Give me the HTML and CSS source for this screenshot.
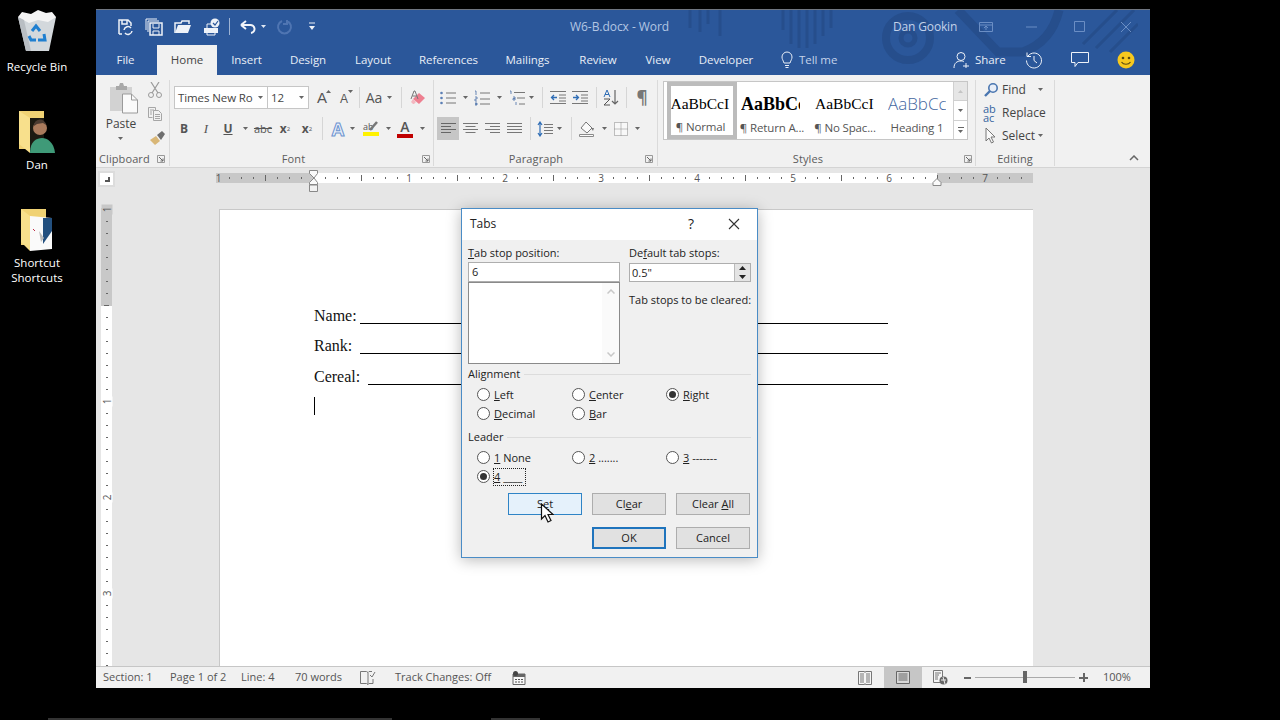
FILE: index.html
```html
<!DOCTYPE html>
<html lang="en">
<head>
<meta charset="utf-8">
<title>W6-B.docx - Word</title>
<link rel="stylesheet" href="styles.css">
</head>
<body>
<svg class="defs" width="0" height="0">
  <symbol id="caret" viewBox="0 0 5 3"><path d="M0 0h5L2.500 3z"/></symbol>
  <symbol id="launch" viewBox="0 0 8 8"><path d="M.5.5h7v7h-7z" fill="none" stroke="#999"/><path d="M2 2l4 4M6 3.5V6H3.500" fill="none" stroke="#666"/></symbol>
</svg>

<aside class="desktop">
  <div class="dicon bin">
    <svg width="40" height="44" viewBox="0 0 40 44"><path d="M1 8l8 34 23 0 7-34z" fill="#d3d8dc"/><path d="M1 8l4-5 9 2 7-4 8 3 6-1 4 5-8 5-10-2-9 3z" fill="#f4f4f4"/><path d="M9 42L1 8l6 3 7 31z" fill="#b9bec3"/><g fill="none" stroke="#1f7fd0" stroke-width="3"><path d="M15 22l4-5 4 5"/><path d="M27 25l1 6h-7"/><path d="M12 27l2 4h5"/></g></svg>
    <span>Recycle Bin</span>
  </div>
  <div class="dicon dan">
    <svg width="36" height="42" viewBox="0 0 36 42"><path d="M0 0h25v38H0z" fill="#f0d274"/><path d="M0 0l11 7v35L0 33z" fill="#f8e08c"/><path d="M11 7h14v31H11z" fill="#1c1a12"/><circle cx="21" cy="17" r="7" fill="#a97a5c"/><path d="M15 15a6 6 0 0 1 12-1l-3-2-6 1z" fill="#4a3a30"/><path d="M11 42c0-12 7-15 12-15s12 4 13 15z" fill="#3f9a78"/></svg>
    <span>Dan</span>
  </div>
  <div class="dicon shortcut">
    <svg width="32" height="42" viewBox="0 0 32 42"><path d="M0 0h25v36H0z" fill="#f0d274"/><path d="M0 0l9 7v35L0 33z" fill="#f8e08c"/><path d="M9 7l22 2v31L9 42z" fill="#fafafa"/><path d="M22 9h9v13l-9 13z" fill="#23507f"/><path d="M18 22l5 7-3 4z" fill="#bbb"/><path d="M12 20l2 2" stroke="#c0304a"/></svg>
    <span>Shortcut<br>Shortcuts</span>
  </div>
</aside>

<main class="window">
  <div class="chrome">
    <svg class="pattern" width="480" height="66" viewBox="0 0 480 66"><g fill="none" stroke="#264e8c"><g stroke-width="3"><path d="M32 0v18M42 0v22M50 0v14M62 0v26M125 0v20M133 0v34M141 0v38M149 0v38M157 0v34M165 0v26M173 0v18"/></g><circle cx="250" cy="28" r="22" stroke-width="8"/><circle cx="250" cy="28" r="7" stroke-width="5"/><path d="M300 0l40 42h25c22-8 32-25 36-42" stroke-width="9"/><path d="M425 34l34-34M438 38l38-38M452 42l28-28" stroke-width="3"/></g></svg>
    <header class="titlebar">
      <div class="qat">
        <svg class="q" width="18" height="18" viewBox="0 0 18 18"><path d="M3 16V2h9l3 3v3M3 16h3M6 2v4h5V2" fill="none" stroke="#eef2f8" stroke-width="1.500"/><path d="M8 12a4 4 0 0 1 7-2M16 13a4 4 0 0 1-7 2" fill="none" stroke="#eef2f8" stroke-width="1.500"/></svg>
        <svg class="q" width="18" height="18" viewBox="0 0 18 18"><path d="M1 12V1h11M3 14V3h11" fill="none" stroke="#eef2f8"/><path d="M5 17V5h12v12z" fill="none" stroke="#eef2f8" stroke-width="1.500"/><path d="M8 6v4h6V6M8 17v-4h6v4" fill="none" stroke="#eef2f8"/></svg>
        <svg class="q" width="18" height="18" viewBox="0 0 18 18"><path d="M1 15V5h6l1-2h7v3" fill="none" stroke="#eef2f8" stroke-width="1.500"/><path d="M1 15l3-8h13l-3 8z" fill="#eef2f8"/></svg>
        <svg class="q" width="18" height="18" viewBox="0 0 18 18"><path d="M1 10h14v5H1z" fill="#eef2f8"/><path d="M4 10V6h6M4 15v2h8v-2" fill="none" stroke="#eef2f8"/><circle cx="12" cy="5" r="4.500" fill="#eef2f8"/><path d="M10 5l2 2 3-4" fill="none" stroke="#2b579a" stroke-width="1.200"/></svg>
        <i class="qsep"></i>
        <svg class="q undo" width="18" height="18" viewBox="0 0 18 18"><path d="M2 7l5-4M2 7l5 4M2 7h9a4 4 0 0 1 1 8" fill="none" stroke="#f2f5fa" stroke-width="2"/></svg>
        <svg class="ct white"><use href="#caret"/></svg>
        <svg class="q redo" width="18" height="18" viewBox="0 0 18 18"><path d="M7 3a6.500 6.500 0 1 0 5 0M12 2v4h-4" fill="none" stroke="#4f75b2" stroke-width="2"/></svg>
        <svg class="q cust" width="8" height="9" viewBox="0 0 8 9"><path d="M1 1h6" stroke="#eef2f8"/><path d="M1 4h6L4 8z" fill="#eef2f8"/></svg>
      </div>
      <div class="doc-title">W6-B.docx - Word</div>
      <div class="user">Dan Gookin</div>
      <div class="winbtns">
        <svg width="14" height="10" viewBox="0 0 14 10"><path d="M.5.500h13v9H.5zM.5 3h13M7 8V4M5 6l2-2 2 2" fill="none" stroke="#6b8ec4"/></svg>
        <svg width="12" height="10" viewBox="0 0 12 10"><path d="M0 5h11" stroke="#6b8ec4"/></svg>
        <svg width="12" height="12" viewBox="0 0 12 12"><path d="M.5.500h10v10H.5z" fill="none" stroke="#6b8ec4"/></svg>
        <svg width="12" height="12" viewBox="0 0 12 12"><path d="M1 1l10 10M11 1L1 11" stroke="#6b8ec4"/></svg>
      </div>
    </header>

    <nav class="tabs">
      <span class="tab t-file">File</span>
      <span class="tab t-home">Home</span>
      <span class="tab t-ins">Insert</span>
      <span class="tab t-des">Design</span>
      <span class="tab t-lay">Layout</span>
      <span class="tab t-ref">References</span>
      <span class="tab t-mai">Mailings</span>
      <span class="tab t-rev">Review</span>
      <span class="tab t-vie">View</span>
      <span class="tab t-dev">Developer</span>
      <span class="tab t-tell"><svg width="12" height="18" viewBox="0 0 12 18"><path d="M3 12C2 9 1 8 1 6a5 5 0 0 1 10 0c0 2-1 3-2 6zM4 14.500h4M4.500 16.500h3" fill="none" stroke="#e8eef7"/></svg><span class="dim">Tell me</span></span>
      <span class="tab t-share"><svg width="16" height="18" viewBox="0 0 16 18"><circle cx="8" cy="5.500" r="4" fill="none" stroke="#eef2f8"/><path d="M1 17c0-5 3-7 7-7 1 0 2 0 3 1M10 15h6M13 12v5" fill="none" stroke="#eef2f8"/></svg><span>Share</span></span>
      <svg class="t-hist" width="18" height="18" viewBox="0 0 18 18"><path d="M3 5a7.500 7.500 0 1 1-1.500 4.500M2 1.500V5.500h4M9 5v4.500l3 2.500" fill="none" stroke="#eef2f8"/></svg>
      <svg class="t-com" width="18" height="16" viewBox="0 0 18 16"><path d="M.5.500h17v10H7l-3 4v-4H.5z" fill="none" stroke="#eef2f8"/></svg>
      <svg class="t-smile" width="18" height="18" viewBox="0 0 18 18"><circle cx="9" cy="9" r="8.500" fill="#f6c81e"/><circle cx="6" cy="7" r="1.300" fill="#5a4a10"/><circle cx="12" cy="7" r="1.300" fill="#5a4a10"/><path d="M4.500 11c2 3 7 3 9 0" fill="none" stroke="#5a4a10" stroke-width="1.200"/></svg>
    </nav>
  </div>

  <section class="ribbon">
    <div class="group g-clip">
      <div class="clip-body">
        <div class="paste">
          <svg width="28" height="31" viewBox="0 0 28 31"><path d="M0 4h22v24H0z" fill="#d2d2d2"/><path d="M6 3h3l1-3h3l1 3h3v4H6z" fill="#a8a8a8"/><path d="M12.500 11h9l6 6v13h-15z" fill="#fafafa" stroke="#9a9a9a"/><path d="M21.500 11v6h6" fill="none" stroke="#9a9a9a"/></svg>
          <span class="paste-l">Paste</span>
          <svg class="ct"><use href="#caret"/></svg>
        </div>
        <div class="clip-tools">
          <svg width="14" height="16" viewBox="0 0 14 16"><path d="M3 0l7 11M11 0L4 11" stroke="#9a9a9a" stroke-width="1.200"/><circle cx="3" cy="13" r="2.500" fill="none" stroke="#9a9a9a"/><circle cx="11" cy="13" r="2.500" fill="none" stroke="#9a9a9a"/></svg>
          <svg width="14" height="14" viewBox="0 0 14 14"><path d="M.5.500h7v3M.5.500v10h4M2 3h4M2 5h2M2 7h2M5.500 3.500h5l3 3v7h-8zM7 7.500h5M7 9.500h5M7 11.500h5" fill="none" stroke="#a6a6a6"/></svg>
          <svg class="brush" width="16" height="14" viewBox="0 0 16 14"><path d="M1 9l6-4 4 5-5 4z" fill="#d9b777"/><path d="M8 4l5-4 3 3-4 6z" fill="#6e6e6e"/></svg>
        </div>
      </div>
      <div class="glabel l-clip"><span>Clipboard</span><svg class="launch"><use href="#launch"/></svg></div>
    </div>

    <div class="group g-font">
      <div class="row r-f1">
        <div class="sel s-font"><span>Times New Ro</span><svg class="ct"><use href="#caret"/></svg></div>
        <div class="sel s-size"><span>12</span><svg class="ct"><use href="#caret"/></svg></div>
        <div class="c w22 grow"><span class="bigA">A</span><svg class="tri" width="5" height="3" viewBox="0 0 5 3"><path d="M0 3h5L2.500 0z" fill="#666"/></svg></div>
        <div class="c w22 grow"><span class="smallA">A</span><svg class="tri" width="5" height="3" viewBox="0 0 5 3"><path d="M0 0h5L2.500 3z" fill="#666"/></svg></div>
        <div class="c w8"><i class="vs"></i></div>
        <div class="c w22 aa">Aa</div>
        <div class="c w8"><svg class="ct"><use href="#caret"/></svg></div>
        <div class="c w16"><i class="vs"></i></div>
        <div class="c w18 eraser"><svg width="16" height="16" viewBox="0 0 16 16"><path d="M3 9l6-6 6 5-6 6z" fill="#ee7f90"/><path d="M3 9l3 3-2 2H3L1 12z" fill="#f4b7c0"/><path d="M1 9l3-8h1l3 8M2.500 6h4" fill="none" stroke="#777"/></svg></div>
      </div>
      <div class="row r-f2">
        <div class="c w22 tb">B</div>
        <div class="c w22 ti">I</div>
        <div class="c w22 tu">U</div>
        <div class="c w13"><svg class="ct"><use href="#caret"/></svg></div>
        <div class="c w22 ts">abc</div>
        <div class="c w22 tx">x<sub>2</sub></div>
        <div class="c w22 tx">x<sup>2</sup></div>
        <div class="c w9"><i class="vs tall"></i></div>
        <div class="c w22 fx">A</div>
        <div class="c w7"><svg class="ct"><use href="#caret"/></svg></div>
        <div class="c w30"><div class="hl"><span class="hl-t">ab</span><svg class="hl-pen" width="9" height="10" viewBox="0 0 9 10"><path d="M1 9l7-8" stroke="#777" stroke-width="2.500"/></svg><i class="hlbar"></i></div></div>
        <div class="c w4"><svg class="ct"><use href="#caret"/></svg></div>
        <div class="c w30"><div class="fc"><span>A</span><i class="fcbar"></i></div></div>
        <div class="c w4"><svg class="ct"><use href="#caret"/></svg></div>
      </div>
      <div class="glabel l-font"><span>Font</span><svg class="launch"><use href="#launch"/></svg></div>
    </div>

    <div class="group g-para">
      <div class="row r-p1">
        <div class="c w22"><svg width="16" height="14" viewBox="0 0 16 14"><g fill="#5b7fb5"><circle cx="1.500" cy="2" r="1.300"/><circle cx="1.500" cy="7" r="1.300"/><circle cx="1.500" cy="12" r="1.300"/></g><path d="M6 2h10M6 7h10M6 12h10" stroke="#777"/></svg></div>
        <div class="c w12"><svg class="ct"><use href="#caret"/></svg></div>
        <div class="c w22"><svg width="16" height="16" viewBox="0 0 16 16"><path d="M1 1h1v4M1 7h2v2H1v2h2M1 13h2v1H1h2v1H1" fill="none" stroke="#4a6fa8" stroke-width=".8"/><path d="M6 3h10M6 9h10M6 14h10" stroke="#777"/></svg></div>
        <div class="c w12"><svg class="ct"><use href="#caret"/></svg></div>
        <div class="c w24"><svg width="16" height="16" viewBox="0 0 16 16"><path d="M1 1h1v3M4 7h2v3H4V8.500h2M7 12v3" fill="none" stroke="#4a6fa8" stroke-width=".8"/><path d="M5 2.500h11M8 8h8M10 14h6" stroke="#777"/></svg></div>
        <div class="c w4"><svg class="ct"><use href="#caret"/></svg></div>
        <div class="c w18"><i class="vs"></i></div>
        <div class="c w14"><svg width="16" height="13" viewBox="0 0 16 13"><path d="M0 .500h16M9 4h7M9 7h7M9 10h7M0 12.500h16" stroke="#777"/><path d="M7 6.500H2M4 4L1.500 6.500 4 9" fill="none" stroke="#2f6db5" stroke-width="1.300"/></svg></div>
        <div class="c w30"><svg width="16" height="13" viewBox="0 0 16 13"><path d="M0 .500h16M9 4h7M9 7h7M9 10h7M0 12.500h16" stroke="#777"/><path d="M1 6.500h5M4 4l2.500 2.500L4 9" fill="none" stroke="#2f6db5" stroke-width="1.300"/></svg></div>
        <div class="c w2"><i class="vs"></i></div>
        <div class="c w28"><svg width="16" height="17" viewBox="0 0 16 17"><path d="M1 8l3-7 3 7M2 5.500h4" fill="none" stroke="#2f6db5"/><path d="M1 10h6L1 16h6" fill="none" stroke="#555"/><path d="M12 1v14M9 12l3 3 3-3" fill="none" stroke="#666" stroke-width="1.200"/></svg></div>
        <div class="c w2"><i class="vs"></i></div>
        <div class="c w30 pil">¶</div>
      </div>
      <div class="row r-p2">
        <div class="c w22 sel-on"><svg width="15" height="12" viewBox="0 0 15 12"><path d="M0 .500h15M0 3.500h10M0 6.500h15M0 9.500h10" stroke="#666"/></svg></div>
        <div class="c w22"><svg width="15" height="12" viewBox="0 0 15 12"><path d="M0 .500h15M2.500 3.500h10M0 6.500h15M2.500 9.500h10" stroke="#777"/></svg></div>
        <div class="c w22"><svg width="15" height="12" viewBox="0 0 15 12"><path d="M0 .500h15M5 3.500h10M0 6.500h15M5 9.500h10" stroke="#777"/></svg></div>
        <div class="c w22"><svg width="15" height="12" viewBox="0 0 15 12"><path d="M0 .500h15M0 3.500h15M0 6.500h15M0 9.500h15" stroke="#777"/></svg></div>
        <div class="c w10"><i class="vs tall"></i></div>
        <div class="c w20"><svg width="16" height="16" viewBox="0 0 16 16"><path d="M3 1v14M1 4l2-3 2 3M1 12l2 3 2-3" fill="none" stroke="#2f6db5" stroke-width="1.200"/><path d="M7 3.500h9M7 6.500h9M7 9.500h9M7 12.500h9" stroke="#777"/></svg></div>
        <div class="c w8"><svg class="ct"><use href="#caret"/></svg></div>
        <div class="c w16"><i class="vs tall"></i></div>
        <div class="c w16"><svg width="16" height="16" viewBox="0 0 16 16"><path d="M7 1l6 6-5 5-6-5z" fill="#fafafa" stroke="#777"/><path d="M12 7l2 3 1-3z" fill="#777"/><path d="M.5 13.500h14v2H.5z" fill="#fafafa" stroke="#8a8a8a"/></svg></div>
        <div class="c w18"><svg class="ct"><use href="#caret"/></svg></div>
        <div class="c w16"><svg width="14" height="14" viewBox="0 0 14 14"><path d="M.5.500h13v13H.5zM7 .500v13M.5 7h13" fill="#f8f8f8" stroke="#888" stroke-dasharray="1 1"/></svg></div>
        <div class="c w16"><svg class="ct"><use href="#caret"/></svg></div>
      </div>
      <div class="glabel l-para"><span>Paragraph</span><svg class="launch"><use href="#launch"/></svg></div>
    </div>

    <div class="group g-styles">
      <div class="gallery">
        <div class="sty sty-on"><span class="st st-n">AaBbCcI</span><span class="sl">¶ Normal</span></div>
        <div class="sty sty-ret"><span class="st st-b">AaBbCcI</span><span class="sl">¶ Return A...</span></div>
        <div class="sty"><span class="st st-n">AaBbCcI</span><span class="sl">¶ No Spac...</span></div>
        <div class="sty"><span class="st st-h">AaBbCcI</span><span class="sl">Heading 1</span></div>
        <div class="gscroll">
          <div class="gb off"><svg class="ct up"><use href="#caret"/></svg></div>
          <div class="gb"><svg class="ct"><use href="#caret"/></svg></div>
          <div class="gb more"><i></i><svg class="ct"><use href="#caret"/></svg></div>
        </div>
      </div>
      <div class="glabel l-sty"><span>Styles</span><svg class="launch"><use href="#launch"/></svg></div>
    </div>

    <div class="group g-edit">
      <div class="edit-list">
        <div class="ed"><svg class="edi" width="16" height="16" viewBox="0 0 16 16"><circle cx="10" cy="6" r="4.200" fill="#e8eef7" stroke="#4a76b0" stroke-width="1.600"/><path d="M7 9l-5 5" stroke="#4a76b0" stroke-width="2.400"/></svg><span>Find</span><svg class="ct c-find"><use href="#caret"/></svg></div>
        <div class="ed"><span class="abac">ab<br>ac</span><span>Replace</span></div>
        <div class="ed"><svg class="edi" width="16" height="18" viewBox="0 0 16 18"><path d="M3 1v13l3-3 2.500 5 2-1-2.500-5h4z" fill="#fafafa" stroke="#777"/></svg><span>Select</span><svg class="ct c-sel"><use href="#caret"/></svg></div>
      </div>
      <div class="glabel l-edit"><span>Editing</span></div>
    </div>
    <div class="collapse"><svg width="10" height="6" viewBox="0 0 10 6"><path d="M1 5l4-4 4 4" fill="none" stroke="#666" stroke-width="1.500"/></svg></div>
  </section>

  <div class="workspace">
    <div class="ruler-row">
      <div class="corner"><i></i></div>
      <div class="hruler">
        <span class="n first"><b>1</b></span><span class="n"></span><span class="n"><b>1</b></span><span class="n"><b>2</b></span><span class="n"><b>3</b></span><span class="n"><b>4</b></span><span class="n"><b>5</b></span><span class="n"><b>6</b></span><span class="n"><b class="g">7</b></span>
        <svg class="ind-l" width="10" height="22" viewBox="0 0 10 22"><path d="M.5.500h8v3L5 8 .5 3.500zM5 8l3.500 4.500v2h-8v-2z" fill="#fafafa" stroke="#888"/><path d="M.5 15h8v6.500h-8z" fill="#f2f2f2" stroke="#888"/></svg>
        <svg class="ind-r" width="10" height="8" viewBox="0 0 10 8"><path d="M5 .500l4 4v3H1v-3z" fill="#fafafa" stroke="#888"/></svg>
      </div>
    </div>
    <div class="doc-row">
      <div class="vruler">
        <span class="vn first"><b class="g">1</b></span><span class="vn"></span><span class="vn"><b>1</b></span><span class="vn"><b>2</b></span><span class="vn"><b>3</b></span>
      </div>
      <article class="page">
        <div class="dl"><span class="lbl">Name:</span><span class="ul"></span></div>
        <div class="dl"><span class="lbl">Rank:</span><span class="ul"></span></div>
        <div class="dl d3"><span class="lbl wide">Cereal:</span><span class="ul"></span></div>
        <i class="caret-line"></i>
      </article>
    </div>
  </div>

  <footer class="status">
    <span class="s s1">Section: 1</span>
    <span class="s s2">Page 1 of 2</span>
    <span class="s s3">Line: 4</span>
    <span class="s s4">70 words</span>
    <svg class="s-book" width="16" height="16" viewBox="0 0 16 16"><path d="M.5 1.500h6l1.500 1v12l-1.500-1h-6zM8 2.500l1-1h3M8 14.500l1-1h4V9" fill="none" stroke="#777"/><path d="M10 5l2 2 3-5" fill="none" stroke="#777"/></svg>
    <span class="s s5">Track Changes: Off</span>
    <svg class="s-macro" width="14" height="14" viewBox="0 0 14 14"><path d="M1 3h12v10.500H1z" fill="#f8f8f8" stroke="#666"/><path d="M1 3h12v3H1z" fill="#666"/><circle cx="3.500" cy="2.500" r="2.500" fill="#444"/><path d="M3 8.500h2M6 8.500h2M9 8.500h2M3 11h2M6 11h2M9 11h2" stroke="#555"/></svg>
    <div class="views">
      <svg class="v-read" width="14" height="14" viewBox="0 0 14 14"><path d="M.5.500h6l.5 1 .5-1h6v13h-6l-.5-1-.5 1h-6zM2 3h4M2 5h4M2 7h4M2 9h4M2 11h4M8 3h4M8 5h4M8 7h4M8 9h4M8 11h4" fill="#f4f4f4" stroke="#777"/></svg>
      <div class="v-print"><svg width="14" height="13" viewBox="0 0 14 13"><path d="M.5.500h13v12H.5zM2.500 3h9M2.500 5h9M2.500 7h9M2.500 9h9" fill="#d8d8d8" stroke="#666"/></svg></div>
      <svg class="v-web" width="15" height="15" viewBox="0 0 15 15"><path d="M.5.500h9v12H.5zM2 3h6M2 5h4M2 7h3M2 9h3" fill="#f4f4f4" stroke="#777"/><circle cx="10.500" cy="10.500" r="4" fill="#666"/><path d="M8 10h5M10 7l2 7" stroke="#eee"/></svg>
      <div class="zoom"><i class="zm"></i><div class="zline"><i class="zthumb"></i></div><i class="zp"></i></div>
      <span class="s pct">100%</span>
    </div>
  </footer>

  <div class="dialog">
    <div class="dlg-title"><span>Tabs</span><span class="q-mark">?</span><svg width="12" height="12" viewBox="0 0 12 12"><path d="M1 1l10 10M11 1L1 11" stroke="#333" stroke-width="1.100"/></svg></div>
    <div class="dlg-body">
      <div class="dlg-top">
        <div class="col-l">
          <div class="flabel"><u>T</u>ab stop position:</div>
          <div class="inp">6</div>
          <div class="list">
            <div class="list-sb">
              <svg width="8" height="5" viewBox="0 0 8 5"><path d="M.5 4.500L4 1l3.500 3.500" fill="none" stroke="#c8c8c8" stroke-width="1.500"/></svg>
              <svg width="8" height="5" viewBox="0 0 8 5"><path d="M.5.500L4 4 7.500.500" fill="none" stroke="#c8c8c8" stroke-width="1.500"/></svg>
            </div>
          </div>
        </div>
        <div class="col-r">
          <div class="flabel">De<u>f</u>ault tab stops:</div>
          <div class="spin"><span>0.5"</span><div class="spb"><i><svg width="7" height="4" viewBox="0 0 7 4"><path d="M0 4h7L3.500 0z" fill="#222"/></svg></i><i><svg width="7" height="4" viewBox="0 0 7 4"><path d="M0 0h7L3.500 4z" fill="#222"/></svg></i></div></div>
          <div class="clearing">Tab stops to be cleared:</div>
        </div>
      </div>
      <div class="legend l1"><span>Alignment</span><i></i></div>
      <div class="radios">
        <label class="ra"><i class="rd"></i><span><u>L</u>eft</span></label>
        <label class="ra"><i class="rd"></i><span><u>C</u>enter</span></label>
        <label class="ra"><i class="rd on"></i><span><u>R</u>ight</span></label>
        <label class="ra"><i class="rd"></i><span><u>D</u>ecimal</span></label>
        <label class="ra"><i class="rd"></i><span><u>B</u>ar</span></label>
      </div>
      <div class="legend l2"><span>Leader</span><i></i></div>
      <div class="radios">
        <label class="ra"><i class="rd"></i><span><u>1</u> None</span></label>
        <label class="ra"><i class="rd"></i><span><u>2</u> .......</span></label>
        <label class="ra"><i class="rd"></i><span><u>3</u> -------</span></label>
        <label class="ra"><i class="rd on"></i><span class="focus"><u>4</u> ____</span></label>
      </div>
      <div class="btns b1">
        <span class="btn hot">S<u>e</u>t</span>
        <span class="btn">Cl<u>e</u>ar</span>
        <span class="btn">Clear <u>A</u>ll</span>
      </div>
      <div class="btns b2">
        <span class="btn def">OK</span>
        <span class="btn">Cancel</span>
      </div>
    </div>
    <svg class="cursor" width="14" height="20" viewBox="0 0 14 20"><path d="M1.500 1v15l3.500-3.500 3 6.500 3-1.500-3-6h5z" fill="#fff" stroke="#111" stroke-width="1.200"/></svg>
  </div>
</main>

<div class="taskstrip"><i class="ts1"></i><i class="ts2"></i></div>
</body>
</html>
```

FILE: styles.css
```css
* { box-sizing: border-box; }
html, body { margin: 0; height: 720px; overflow: hidden; }
body {
  background: #000;
  display: flex;
  align-items: flex-start;
  font-family: "Open Sans", "Noto Sans", sans-serif;
  color: #444;
}
.defs { position: absolute; }
i { display: block; font-style: normal; }
svg { flex-shrink: 0; display: block; }

/* desktop */
.desktop { width: 96px; flex-shrink: 0; display: flex; flex-direction: column; align-items: flex-start; }
.dicon { width: 74px; display: flex; flex-direction: column; align-items: center; color: #fff; font-size: 11.5px; line-height: 15px; text-align: center; letter-spacing: .05px; }
.dicon.bin { margin-top: 9px; }
.dicon.bin span { margin-top: 6px; }
.dicon.dan { margin-top: 37px; }
.dicon.dan span { margin-top: 4px; }
.dicon.shortcut { margin-top: 37px; }
.dicon.shortcut span { margin-top: 4px; }

/* window */
.window { position: relative; width: 1054px; height: 679px; margin-top: 9px; flex-shrink: 0; display: flex; flex-direction: column; background: #e6e6e6; border-top: 1px solid #6f7580; }
.chrome { position: relative; flex-shrink: 0; overflow: hidden; background: #2b579a; }
.pattern { position: absolute; left: 562px; top: 0; }
.titlebar { position: relative; height: 33px; display: flex; align-items: center; }
.qat { display: flex; align-items: center; margin-left: 20px; width: 354px; flex-shrink: 0; }
.q { margin-right: 11px; }
.q.undo { margin-right: 4px; }
.q.redo { margin: 0 0 0 9px; }
.q.cust { margin: 0 0 0 15px; }
.qsep { width: 1px; height: 17px; background: #9db3d4; margin: 0 9px 0 -3px; }
.ct { width: 5px; height: 3px; fill: #666; }
.ct.white { fill: #dfe7f3; }
.ct.up { transform: rotate(180deg); }
.doc-title { width: 323px; margin-left: 100px; flex-shrink: 0; font-size: 12px; color: #b3c6e3; letter-spacing: -.05px; }
.user { width: 86px; flex-shrink: 0; font-size: 12px; color: #c3d2e9; letter-spacing: -.15px; }
.winbtns { display: flex; align-items: center; }
.winbtns svg:nth-child(1) { margin-right: 33px; }
.winbtns svg:nth-child(2) { margin-right: 36px; }
.winbtns svg:nth-child(3) { margin-right: 34px; }

.tabs { position: relative; height: 32px; display: flex; align-items: flex-end; color: #e8eef7; font-size: 11.5px; letter-spacing: -.05px; }
.tab { height: 30px; display: flex; align-items: center; justify-content: center; line-height: 16px; flex-shrink: 0; }
.t-file { width: 61px; padding-right: 2px; }
.t-home { width: 60px; background: #f1f1f1; color: #444; }
.t-ins { width: 59px; }
.t-des { width: 64px; }
.t-lay { width: 66px; }
.t-ref { width: 85px; }
.t-mai { width: 73px; }
.t-rev { width: 68px; }
.t-vie { width: 52px; }
.t-dev { width: 84px; }
.t-tell { width: 68px; margin-left: 13px; justify-content: flex-start; }
.t-tell .dim { color: #c4d3ea; margin-left: 6px; }
.t-share { width: 72px; margin-left: 104px; justify-content: flex-start; }
.t-share span { margin-left: 6px; }
.t-hist { margin: 0 0 6px 0; flex-shrink: 0; }
.t-com { margin: 0 0 7px 28px; }
.t-smile { margin: 0 0 6px 28px; }

/* ribbon */
.ribbon { height: 93px; flex-shrink: 0; background: #f1f1f1; border-bottom: 1px solid #d4d4d4; display: flex; font-size: 11.5px; color: #444; }
.group { display: flex; flex-direction: column; border-right: 1px solid #dadada; margin: 5px 0 1px; position: relative; }
.g-clip { width: 74px; }
.g-font { width: 264px; padding: 6px 0 0 3px; }
.g-para { width: 224px; padding: 6px 0 0 3px; }
.g-styles { width: 318px; padding: 1px 0 0 5px; }
.g-edit { width: 79px; }
.glabel { margin-top: auto; height: 15px; display: flex; align-items: center; justify-content: center; font-size: 11px; line-height: 15px; color: #5c5c5c; position: relative; letter-spacing: .1px; }
.launch { position: absolute; right: 3px; top: 4px; width: 8px; height: 8px; }
.l-clip { justify-content: flex-start; padding-left: 3px; }
.l-clip .launch { right: 4px; }
.l-font { padding-right: 19px; }
.l-para { padding-right: 22px; }
.l-para .launch { right: 4px; }
.l-sty { padding-right: 22px; }

.clip-body { display: flex; padding-top: 3px; }
.paste { width: 49px; padding-left: 14px; display: flex; flex-direction: column; }
.paste-l { width: 40px; margin: 2px 0 0 -9px; text-align: center; line-height: 16px; font-size: 12px; }
.paste .ct { margin: 5px 0 0 8px; }
.clip-tools { display: flex; flex-direction: column; align-items: center; width: 20px; gap: 9px; margin-top: -1px; }
.brush { margin-left: 3px; margin-top: 1px; }

.row { display: flex; align-items: center; height: 23px; }
.r-f1 { margin-left: 1px; }
.r-f2, .r-p2 { margin-top: 8px; }
.c { display: flex; align-items: center; justify-content: center; height: 23px; flex-shrink: 0; position: relative; color: #555; }
.w2 { width: 2px; } .w4 { width: 4px; } .w7 { width: 7px; } .w8 { width: 8px; } .w9 { width: 9px; }
.w10 { width: 10px; } .w12 { width: 12px; } .w13 { width: 13px; } .w14 { width: 14px; } .w16 { width: 16px; }
.w18 { width: 18px; } .w20 { width: 20px; } .w22 { width: 22px; } .w24 { width: 24px; } .w28 { width: 28px; } .w30 { width: 30px; }
.vs { width: 1px; height: 21px; background: #d6d6d6; flex-shrink: 0; }
.vs.tall { height: 23px; }
.sel { height: 23px; background: #fff; border: 1px solid #c6c6c6; display: flex; align-items: center; justify-content: space-between; padding: 0 4px 0 3px; font-size: 11.500px; letter-spacing: -.1px; color: #444; flex-shrink: 0; }
.s-font { width: 94px; }
.s-size { width: 42px; margin-left: -1px; }
.s-size + .c { margin-left: 2px; }
.bigA { font-size: 15px; color: #555; font-family: "Liberation Sans", sans-serif; }
.smallA { font-size: 12px; color: #555; font-family: "Liberation Sans", sans-serif; margin-top: 2px; }
.tri { position: absolute; top: 4px; right: 2px; }
.aa { font-size: 14px; color: #555; }
.tb { font-weight: 700; font-size: 12px; }
.ti { font-style: italic; font-family: "Liberation Serif", serif; font-size: 13px; }
.tu { text-decoration: underline; font-weight: 700; font-size: 12px; }
.ts { text-decoration: line-through; font-size: 11px; }
.tx { font-weight: 700; font-size: 12px; }
.tx sub, .tx sup { font-size: 6px; font-weight: 400; line-height: 0; }
.fx { font-size: 18px; font-weight: 700; color: #eaf0fa; -webkit-text-stroke: 1px #6c93cf; line-height: 20px; }
.hl { position: relative; display: flex; flex-direction: column; align-items: flex-start; width: 16px; }
.hl-t { font-size: 9px; line-height: 11px; height: 11px; color: #555; }
.hl-pen { position: absolute; right: 1px; top: 0; }
.hlbar { width: 16px; height: 4px; background: #fff200; }
.fc { display: flex; flex-direction: column; align-items: center; width: 16px; font-size: 14px; font-weight: 600; line-height: 14px; color: #555; }
.fcbar { width: 16px; height: 4px; background: #c00000; }
.pil { font-size: 17px; font-weight: 700; color: #777; }
.sel-on { background: #c6c6c6; }

.gallery { width: 305px; height: 59px; background: #fff; border: 1px solid #c6c6c6; display: flex; position: relative; }
.sty { width: 72px; flex-shrink: 0; display: flex; flex-direction: column; align-items: center; padding-top: 12px; }
.sty-on { width: 70px; height: 57px; margin: 0 0 0 3px; border: 4px solid #bcbcbc; padding: 8px 3px 0 0; }
.sty-ret { padding-right: 5px; }
.sty-ret .sl { margin-right: -3px; }
.st { height: 20px; line-height: 20px; white-space: nowrap; width: 60px; overflow: hidden; color: #000; }
.st-n { font-family: "Liberation Serif", serif; font-size: 15.500px; }
.st-b { font-family: "Liberation Serif", serif; font-size: 18px; font-weight: 700; width: 59px; }
.st-h { font-family: "Open Sans", sans-serif; font-size: 17px; font-weight: 300; color: #44689f; width: 58px; }
.sl { font-size: 11.500px; letter-spacing: -.15px; line-height: 16px; margin-top: 6px; white-space: nowrap; color: #555; }
.gscroll { width: 14px; margin-left: auto; display: flex; flex-direction: column; border-left: 1px solid #d0d0d0; }
.gb { height: 19px; flex: 1; display: flex; flex-direction: column; gap: 2px; align-items: center; justify-content: center; border-bottom: 1px solid #d0d0d0; background: #fff; }
.gb:last-child { border-bottom: 0; }
.gb.off { background: #e6e6e6; }
.gb.off .ct { fill: #c4c4c4; }
.gb.more i { width: 6px; height: 1px; background: #666; }

.edit-list { display: flex; flex-direction: column; margin-top: -2px; }
.ed { height: 23px; display: flex; align-items: center; font-size: 12px; color: #444; padding-left: 7px; }
.ed > span:not(.abac) { margin-left: 3px; }
.abac { width: 16px; font-size: 11px; line-height: 9px; color: #35649f; }
.c-find { margin-left: 12px; }
.c-sel { margin-left: 3px; }
.collapse { flex: 1; display: flex; justify-content: flex-end; align-items: flex-end; padding: 0 11px 6px 0; }

/* workspace */
.workspace { flex: 1; min-height: 0; display: flex; flex-direction: column; overflow: hidden; position: relative; }
.ruler-row { height: 40px; flex-shrink: 0; display: flex; padding: 5px 0 0 4px; }
.corner { width: 13px; height: 12px; background: #fff; box-shadow: 0 0 0 2px #dcdcdc; display: flex; align-items: flex-end; justify-content: flex-end; padding: 0 3px 3px 0; flex-shrink: 0; }
.corner i { width: 5px; height: 5px; border: solid #555; border-width: 0 2px 2px 0; }
.hruler {
  position: relative; width: 817px; height: 10px; margin-left: 103px; display: flex; flex-shrink: 0;
  font-size: 10px; line-height: 10px; color: #555;
  background:
    linear-gradient(90deg, #666 1px, transparent 1px) 145px 2px / 96px 6px repeat-x,
    linear-gradient(90deg, #666 1px, transparent 1px) 1px 4px / 12px 2px repeat-x,
    linear-gradient(90deg, #c8c8c8 97px, #fff 97px 721px, #c8c8c8 721px);
}
.n { width: 96px; flex-shrink: 0; display: flex; justify-content: center; }
.n.first { margin-left: -47px; }
.n b { font-weight: 400; width: 10px; text-align: center; background: #fff; height: 10px; }
.n.first b { width: 6px; margin-left: 3px; background: #c8c8c8; }
.n b.g { background: #c8c8c8; }
.ind-l { position: absolute; left: 93px; top: -3px; }
.ind-r { position: absolute; left: 716px; top: 5px; }
.doc-row { flex: 1; min-height: 0; display: flex; }
.vruler {
  width: 11px; height: 100%; margin-left: 5px; flex-shrink: 0; font-size: 10px; color: #555; display: flex; flex-direction: column; align-items: center;
  background:
    linear-gradient(180deg, #666 1px, transparent 1px) 3px 1px / 5px 96px repeat-y,
    linear-gradient(180deg, #666 1px, transparent 1px) 5px 1px / 2px 12px repeat-y,
    linear-gradient(180deg, #c8c8c8 98px, #fff 98px);
}
.vn { height: 96px; flex-shrink: 0; display: flex; align-items: center; justify-content: center; }
.vn.first { margin-top: -47px; }
.vn b { font-weight: 400; transform: rotate(-90deg); background: #fff; width: 10px; height: 11px; line-height: 11px; text-align: center; display: block; }
.vn b.g { background: #c8c8c8; }
.page { width: 814px; margin: 1px 0 0 107px; background: #fff; border: solid #c8c8c8; border-width: 1px 0 0 1px; padding: 97px 145px 0 94px; font-family: "Liberation Serif", serif; font-size: 16px; color: #111; }
.dl { display: flex; align-items: flex-end; height: 18px; line-height: 18px; margin-bottom: 12px; }
.dl.d3 { margin-top: 13px; height: 18px; }
.lbl { width: 46px; flex-shrink: 0; }
.lbl.wide { width: 54px; }
.ul { flex: 1; border-bottom: 1px solid #000; height: 1px; margin-bottom: 1px; }
.caret-line { width: 1px; height: 18px; background: #000; margin-top: -1px; }

/* status */
.status { height: 22px; flex-shrink: 0; background: #f1f1f1; border-top: 1px solid #c6c6c6; display: flex; align-items: center; padding-left: 7px; font-size: 11px; color: #555; position: relative; }
.s { white-space: nowrap; line-height: 16px; margin-bottom: 2px; }
.s1 { width: 67px; } .s2 { width: 71px; } .s3 { width: 54px; } .s4 { width: 65px; }
.s5 { width: 117px; margin-left: 19px; }
.views { margin-left: auto; margin-right: 16px; display: flex; align-items: center; height: 100%; }
.v-read { margin-right: 12px; }
.v-print { width: 38px; height: 100%; background: #c6c6c6; display: flex; align-items: center; justify-content: center; margin-right: 11px; }
.zoom { display: flex; align-items: center; margin-left: 16px; }
.zm { width: 7px; height: 2px; background: #666; }
.zline { position: relative; width: 100px; height: 1px; background: #aaa; margin: 0 4px; }
.zthumb { position: absolute; left: 48px; top: -6px; width: 4px; height: 12px; background: #666; }
.zp { position: relative; width: 9px; height: 2px; background: #666; }
.zp::after { content: ""; position: absolute; left: 3.500px; top: -3.500px; width: 2px; height: 9px; background: #666; }
.pct { width: 46px; padding-left: 15px; }

/* dialog */
.dialog { position: absolute; left: 365px; top: 198px; width: 297px; height: 350px; background: #f0f0f0; border: 1px solid #4a8cc6; box-shadow: 0 2px 14px rgba(0,0,0,.28); font-size: 11px; color: #222; display: flex; flex-direction: column; }
.dlg-title { height: 31px; background: #fff; display: flex; align-items: center; padding: 0 0 2px 8px; font-size: 12px; }
.dlg-title span:first-child { width: 218px; }
.q-mark { width: 40px; font-size: 14px; }
.dlg-body { padding: 5px 6px 0 6px; }
.dlg-top { display: flex; gap: 9px; height: 119px; }
.col-l { width: 152px; flex-shrink: 0; }
.col-r { width: 122px; flex-shrink: 0; }
.flabel { height: 16px; line-height: 16px; white-space: nowrap; }
.inp { height: 20px; margin-top: 1px; background: #fff; border: 1px solid #aeaeae; padding-left: 3px; line-height: 18px; }
.list { height: 82px; background: #fff; border: 1px solid #8a8a8a; display: flex; justify-content: flex-end; }
.list-sb { width: 17px; background: #fafafa; display: flex; flex-direction: column; justify-content: space-between; align-items: center; padding: 6px 0; }
.spin { height: 19px; margin-top: 2px; background: #fff; border: 1px solid #aeaeae; display: flex; justify-content: space-between; padding-left: 2px; line-height: 17px; }
.spb { width: 16px; display: flex; flex-direction: column; background: #e4e4e4; border-left: 1px solid #bbb; }
.spb i { flex: 1; display: flex; align-items: center; justify-content: center; }
.clearing { margin-top: 10px; line-height: 16px; white-space: nowrap; }
.legend { display: flex; align-items: center; height: 16px; gap: 4px; line-height: 16px; }
.legend i { flex: 1; height: 1px; background: #dcdcdc; }
.l1 { margin-top: 2px; }
.l2 { margin-top: 6px; }
.radios { display: grid; grid-template-columns: 95px 94px 80px; grid-auto-rows: 19px; padding-left: 9px; margin-top: 3px; }
.ra { display: flex; align-items: center; gap: 4px; line-height: 16px; white-space: nowrap; }
.rd { width: 13px; height: 13px; border-radius: 50%; background: #fff; border: 1px solid #555; position: relative; flex-shrink: 0; }
.rd.on::after { content: ""; position: absolute; left: 2px; top: 2px; width: 7px; height: 7px; border-radius: 50%; background: #333; }
.focus { outline: 1px dotted #222; width: 31px; height: 16px; }
.btns { display: flex; justify-content: flex-end; gap: 10px; padding-right: 1px; }
.b1 { margin-top: 7px; }
.b2 { margin-top: 12px; }
.btn { width: 74px; height: 22px; display: flex; align-items: center; justify-content: center; white-space: pre; background: #e1e1e1; border: 1px solid #adadad; padding-bottom: 2px; }
.btn.hot { background: #e5f1fb; border-color: #2f84c6; }
.btn.def { border: 2px solid #1f74bd; }
.cursor { position: absolute; left: 78px; top: 294px; }

.taskstrip i { position: absolute; top: 718px; height: 2px; background: #333; }
.ts1 { left: 48px; width: 344px; }
.ts2 { left: 491px; width: 49px; }
```
